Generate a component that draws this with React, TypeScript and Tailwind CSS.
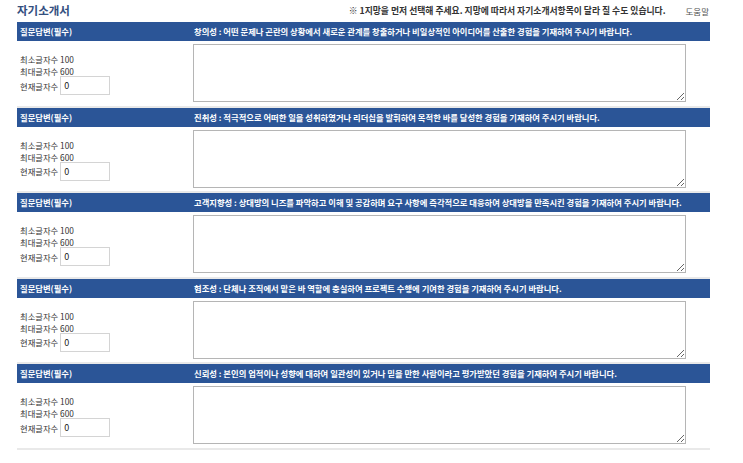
import React from 'react';

const questions = [
  '창의성 : 어떤 문제나 곤란의 상황에서 새로운 관계를 창출하거나 비일상적인 아이디어를 산출한 경험을 기재하여 주시기 바랍니다.',
  '진취성 : 적극적으로 어떠한 일을 성취하였거나 리더십을 발휘하여 목적한 바를 달성한 경험을 기재하여 주시기 바랍니다.',
  '고객지향성 : 상대방의 니즈를 파악하고 이해 및 공감하며 요구 사항에 즉각적으로 대응하여 상대방을 만족시킨 경험을 기재하여 주시기 바랍니다.',
  '협조성 : 단체나 조직에서 맡은 바 역할에 충실하여 프로젝트 수행에 기여한 경험을 기재하여 주시기 바랍니다.',
  '신뢰성 : 본인의 업적이나 성향에 대하여 일관성이 있거나 믿을 만한 사람이라고 평가받았던 경험을 기재하여 주시기 바랍니다.',
];

// 질문 한 개 블록
function QuestionBlock({ text }: { text: string }) {
  return (
    <div className="border-b-2 border-[#e9e9e9]">
      <div className="flex h-[19px] items-center bg-[#2b5597] text-[8.3px] font-bold text-white">
        <div className="w-[176px] pl-[3px]">질문답변(필수)</div>
        <div className="whitespace-nowrap pl-px">{text}</div>
      </div>
      <div className="flex h-[64.5px] items-center">
        <div className="w-[176px] pl-[3px] pt-[2px] text-[8.3px] leading-[12px] text-[#333]">
          <div>최소글자수 100</div>
          <div>최대글자수 600</div>
          <div className="-mt-px flex items-center gap-[2px]">
            <span>현재글자수</span>
            <input
              readOnly
              value="0"
              className="h-[19px] w-[50px] border border-[#d4d4d4] px-[3px] text-[9px] text-[#222]"
            />
          </div>
        </div>
        <textarea className="h-[58px] w-[493px] border border-[#b5b5b5] bg-white" />
      </div>
    </div>
  );
}

export default function App() {
  return (
    <div className="h-[463px] w-[743px] overflow-hidden bg-white font-['Noto_Sans_CJK_KR','Noto_Sans',sans-serif]">
      <div className="ml-[17px] w-[693px]">
        <div className="flex h-[22px] items-center">
          <h2 className="text-[11.5px] font-bold text-[#34507f]">자기소개서</h2>
          <div className="ml-auto text-[8.8px] font-bold text-[#333]">
            ※ 1지망을 먼저 선택해 주세요. 지망에 따라서 자기소개서항목이 달라 질 수도 있습니다.
          </div>
          <div className="ml-[20px] mr-[1px] text-[8.5px] text-[#555]">도움말</div>
        </div>
        {questions.map((q) => (
          <QuestionBlock key={q} text={q} />
        ))}
      </div>
    </div>
  );
}
